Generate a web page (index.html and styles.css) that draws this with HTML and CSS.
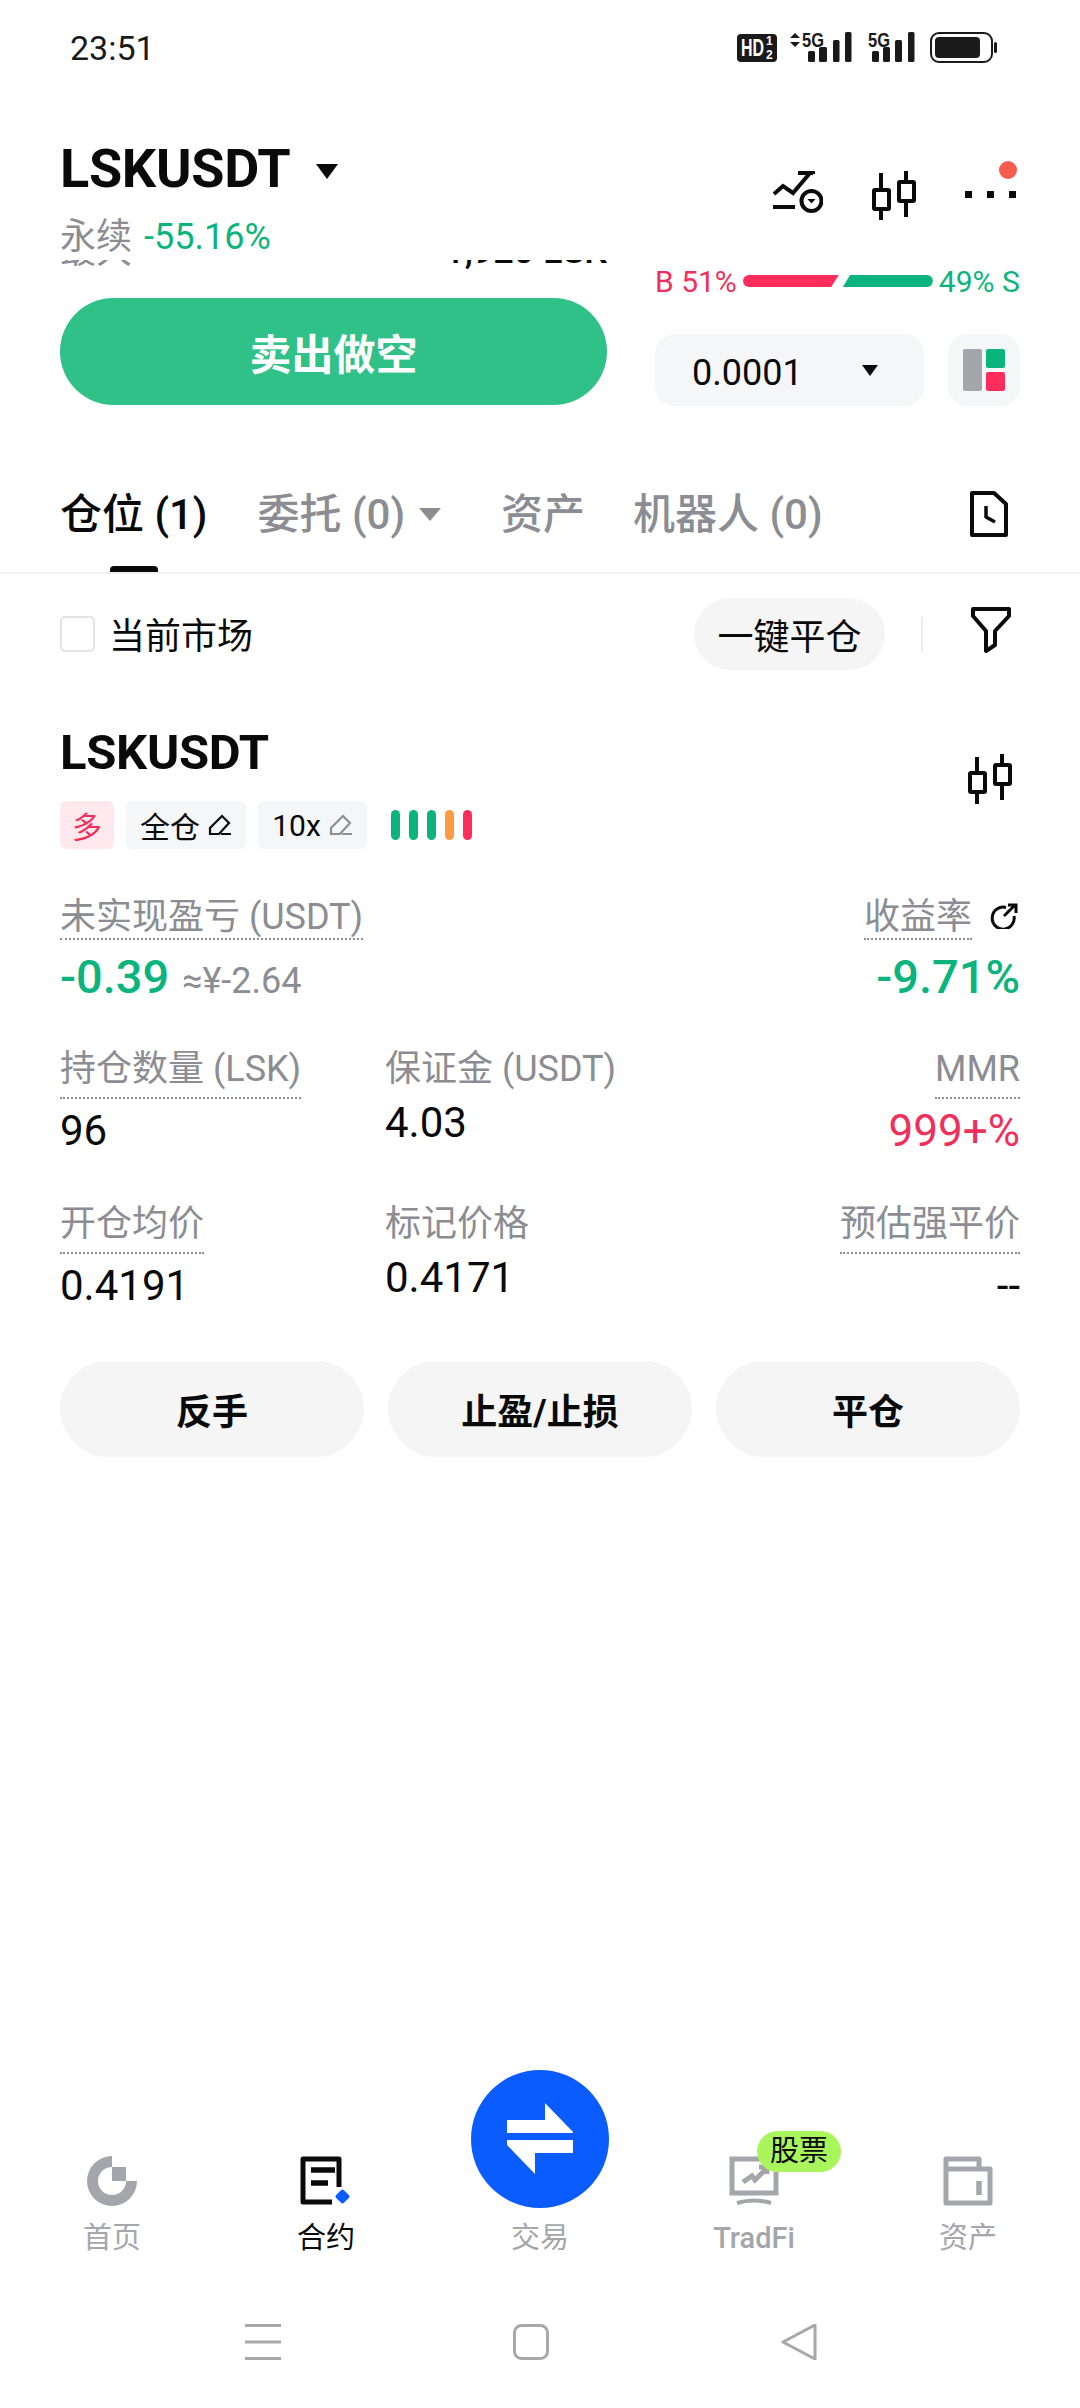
FILE: index.html
```html
<!DOCTYPE html>
<html lang="zh-CN">
<head>
<meta charset="utf-8">
<title>LSKUSDT</title>
<link rel="stylesheet" href="styles.css">
</head>
<body>
<div class="phone">
  <div class="status">
    <span class="clock">23:51</span>
    <svg class="status-icons" width="262" height="34" viewBox="0 0 262 34">
      <rect x="0" y="3" width="40" height="28" rx="4" fill="#1a1a1a"/>
      <text x="4" y="25" class="sb-hd" textLength="23" lengthAdjust="spacingAndGlyphs">HD</text>
      <text x="29" y="14" class="sb-frac">1</text>
      <text x="29" y="28" class="sb-frac">2</text>
      <path d="M53 7l5-5 5 5zM53 11l5 5 5-5z" fill="#1a1a1a"/>
      <text x="65" y="16" class="sb-5g" textLength="22" lengthAdjust="spacingAndGlyphs">5G</text>
      <g fill="#1a1a1a">
        <rect x="71" y="20" width="7" height="11" rx="1.5"/>
        <rect x="82" y="16" width="8" height="15" rx="1.5"/>
        <rect x="96" y="9" width="6.500" height="22" rx="1.500"/>
        <rect x="108" y="1" width="6.500" height="30" rx="1.500"/>
      </g>
      <text x="131" y="16" class="sb-5g" textLength="22" lengthAdjust="spacingAndGlyphs">5G</text>
      <g fill="#1a1a1a">
        <rect x="135" y="20" width="7" height="11" rx="1.5"/>
        <rect x="146" y="16" width="7" height="15" rx="1.5"/>
        <rect x="158" y="9" width="7" height="22" rx="1.500"/>
        <rect x="171" y="1" width="6.500" height="30" rx="1.500"/>
      </g>
      <rect x="194" y="2" width="61" height="29" rx="8" fill="none" stroke="#1a1a1a" stroke-width="2"/>
      <rect x="198" y="6" width="45" height="21" rx="4" fill="#1a1a1a"/>
      <rect x="257" y="11" width="3" height="11" rx="1.500" fill="#1a1a1a"/>
    </svg>
  </div>

  <header class="head">
    <div class="head-left">
      <div class="title-row"><h1 class="title">LSKUSDT</h1><span class="caret caret-title"></span></div>
      <div class="subtitle"><span class="muted sub-name">永续</span><span class="up sub-pct">-55.16%</span></div>
    </div>
    <div class="head-icons">
      <svg class="icon-chart" width="50" height="44" viewBox="0 0 50 44" fill="none" stroke="#0a0a0a" stroke-width="4">
        <path d="M1 24 10 16l10 7L37 3M25 3h15v1"/>
        <path d="M0 37h22"/>
        <circle cx="38.500" cy="31" r="10"/>
        <path d="M34.500 29h8l-4 4.500z" fill="#0a0a0a" stroke="none"/>
      </svg>
      <svg class="icon-candle" width="48" height="52" viewBox="0 0 48 52" fill="none" stroke="#0a0a0a" stroke-width="4">
        <path d="M11 4v47M36 2v46"/>
        <rect x="4" y="21" width="15" height="19" rx="1" fill="#fff"/>
        <rect x="29" y="13" width="15" height="19" rx="1" fill="#fff"/>
      </svg>
      <div class="more">
        <span class="dot"></span><span class="dot"></span><span class="dot"></span>
        <span class="more-badge"></span>
      </div>
    </div>
  </header>

  <section class="trade">
    <div class="trade-left">
      <div class="clipped"><span class="muted">最大</span><span class="clipped-val">1,920 LSK</span></div>
      <button class="sell">卖出做空</button>
    </div>
    <div class="trade-right">
      <div class="ratio">
        <span class="down">B 51%</span>
        <span class="bar bar-buy"></span>
        <span class="bar bar-sell"></span>
        <span class="up">49% S</span>
      </div>
      <div class="controls">
        <div class="qty"><span class="qty-num">0.0001</span><span class="caret caret-qty"></span></div>
        <div class="layout-btn">
          <span class="lay lay-gray"></span>
          <span class="lay-col"><span class="lay lay-green"></span><span class="lay lay-red"></span></span>
        </div>
      </div>
    </div>
  </section>

  <nav class="tabs">
    <span class="tab tab-active">仓位 (1)</span>
    <span class="tab tab-b">委托 (0)</span><span class="caret caret-tab"></span>
    <span class="tab tab-c">资产</span>
    <span class="tab tab-d">机器人 (0)</span>
    <svg class="icon-doc" width="40" height="48" viewBox="0 0 40 48" fill="none" stroke="#0a0a0a" stroke-width="4" stroke-linejoin="round">
      <path d="M3 3h22l12 11v31H3z"/>
      <path d="M17 16v11l9 5" stroke-width="3.500"/>
    </svg>
  </nav>

  <div class="filter">
    <span class="check"></span>
    <span class="filter-label">当前市场</span>
    <button class="close-all">一键平仓</button>
    <span class="sep"></span>
    <svg width="40" height="48" viewBox="0 0 40 48" fill="none" stroke="#0a0a0a" stroke-width="4" stroke-linejoin="round">
      <path d="M2 3h36v7L24 25v14l-9 6V25L2 10z"/>
    </svg>
  </div>

  <section class="position">
    <div class="pos-head">
      <div>
        <h2 class="pos-title">LSKUSDT</h2>
        <div class="tags">
          <span class="tag tag-long">多</span>
          <span class="tag tag-cross">全仓
            <svg width="24" height="24" viewBox="0 0 24 24" fill="none" stroke="#0a0a0a" stroke-width="2.200"><path d="M2 21v-6L14 3l7 7-10 11zM13 21h10"/></svg>
          </span>
          <span class="tag tag-lev">10x
            <svg width="24" height="24" viewBox="0 0 24 24" fill="none" stroke="#8f8f8f" stroke-width="2.200"><path d="M2 21v-6L14 3l7 7-10 11zM13 21h10"/></svg>
          </span>
          <span class="adl">
            <span class="adl-bar adl-g"></span><span class="adl-bar adl-g"></span><span class="adl-bar adl-g"></span><span class="adl-bar adl-o"></span><span class="adl-bar adl-r"></span>
          </span>
        </div>
      </div>
      <svg class="pos-candle" width="48" height="52" viewBox="0 0 48 52" fill="none" stroke="#0a0a0a" stroke-width="4">
        <path d="M11 5v47M36 2v46"/>
        <rect x="4" y="21" width="15" height="19" rx="1" fill="#fff"/>
        <rect x="29" y="13" width="15" height="19" rx="1" fill="#fff"/>
      </svg>
    </div>

    <div class="pnl">
      <div class="cell">
        <span class="label dotted tight">未实现盈亏 (USDT)</span>
        <span class="pnl-val"><span class="big up">-0.39</span><span class="approx">≈¥-2.64</span></span>
      </div>
      <div class="cell cell-right">
        <span class="label-row"><span class="label dotted tight">收益率</span>
          <svg class="icon-share" width="28" height="26" viewBox="0 0 28 26" fill="none" stroke="#0a0a0a" stroke-width="3"><path d="M16 4.500A11 11 0 1 0 24 13M14 13 25 2M18 2h8v8"/></svg>
        </span>
        <span class="big up">-9.71%</span>
      </div>
    </div>

    <div class="row row-2">
      <div class="cell col-a"><span class="label dotted">持仓数量 (LSK)</span><span class="val val-a">96</span></div>
      <div class="cell col-b"><span class="label">保证金 (USDT)</span><span class="val val-b">4.03</span></div>
      <div class="cell cell-right"><span class="label dotted">MMR</span><span class="val val-mmr down">999+%</span></div>
    </div>

    <div class="row row-3">
      <div class="cell col-a"><span class="label dotted">开仓均价</span><span class="val val-a">0.4191</span></div>
      <div class="cell col-b"><span class="label">标记价格</span><span class="val val-b">0.4171</span></div>
      <div class="cell cell-right"><span class="label dotted">预估强平价</span><span class="val val-a">--</span></div>
    </div>

    <div class="actions">
      <button class="action">反手</button>
      <button class="action">止盈/止损</button>
      <button class="action">平仓</button>
    </div>
  </section>

  <div class="spacer"></div>

  <footer class="tabbar">
    <div class="item">
      <svg width="50" height="50" viewBox="0 0 50 50" fill="#a4a6ab">
        <path d="M25 0v11a14 14 0 1 0 14 14h11A25 25 0 1 1 25 0z"/>
        <rect x="25" y="11" width="14" height="14"/>
      </svg>
      <span>首页</span>
    </div>
    <div class="item item-active">
      <svg width="52" height="50" viewBox="0 0 52 50">
        <path d="M39 31V3H3v43h29" fill="none" stroke="#0a0a0a" stroke-width="5" stroke-linejoin="round"/>
        <path d="M11 14h24M11 27h17" stroke="#0a0a0a" stroke-width="5.500"/>
        <rect x="37" y="35" width="11" height="11" rx="2" transform="rotate(45 42.500 40.500)" fill="#0a5cff"/>
      </svg>
      <span>合约</span>
    </div>
    <div class="item item-trade">
      <div class="trade-fab">
        <svg width="66" height="72" viewBox="0 0 66 72" fill="#fff">
          <path d="M38 0 66 29v1H0V17h38zM0 37h66v13H28v21L0 42z"/>
        </svg>
      </div>
      <span>交易</span>
    </div>
    <div class="item item-latin">
      <svg width="50" height="50" viewBox="0 0 50 50" fill="none" stroke="#a4a6ab">
        <path d="M32 3H3v34h44V16" stroke-width="5"/>
        <path d="M14 26l9-6 3 4 10-10M30 11h8v7" stroke-width="5"/>
        <path d="M8 47q17-5 34 0" stroke-width="4"/>
      </svg>
      <span class="badge">股票</span>
      <span>TradFi</span>
    </div>
    <div class="item">
      <svg width="50" height="50" viewBox="0 0 50 50" fill="none" stroke="#a4a6ab" stroke-width="5">
        <path d="M3 47V3h33v10M3 13h44v34H3z" stroke-linejoin="round"/>
        <path d="M36 25v14" stroke-width="5.500"/>
      </svg>
      <span>资产</span>
    </div>
  </footer>

  <div class="sysnav">
    <svg width="36" height="36" viewBox="0 0 36 36" stroke="#a8a8a8" stroke-width="3"><path d="M0 1.500h36M0 18h36M0 34.500h36"/></svg>
    <svg width="36" height="36" viewBox="0 0 36 36" fill="none" stroke="#a8a8a8" stroke-width="3"><rect x="1.500" y="1.500" width="33" height="33" rx="7"/></svg>
    <svg width="36" height="36" viewBox="0 0 36 36" fill="none" stroke="#a8a8a8" stroke-width="3" stroke-linejoin="round"><path d="M2 18 34 1v34z"/></svg>
  </div>
</div>
</body>
</html>
```

FILE: styles.css
```css
* { box-sizing: border-box; }
html, body { margin: 0; padding: 0; background: #fff; }
body { font-family: Roboto, "Noto Sans CJK SC", sans-serif; color: #0a0a0a; }
button { font-family: inherit; border: 0; padding: 0; color: inherit; }
h1, h2 { margin: 0; }

.phone { width: 1080px; height: 2408px; display: flex; flex-direction: column; overflow: hidden; background: #fff; }
.up { color: #0cb47d; }
.down { color: #f0305c; }
.muted { color: #8b8d92; }

.status { height: 96px; display: flex; align-items: center; justify-content: space-between; padding: 0 81px 0 70px; flex: none; }
.clock { font-size: 34px; color: #1a1a1a; }
.status-icons { display: block; }
.sb-hd { font: 700 23px "Liberation Sans", sans-serif; fill: #fff; }
.sb-frac { font: 700 12px "Liberation Sans", sans-serif; fill: #fff; }
.sb-5g { font: 700 20px "Liberation Sans", sans-serif; fill: #1a1a1a; }

.head { height: 162px; flex: none; display: flex; justify-content: space-between; padding: 41px 60px 0; }
.title-row { display: flex; align-items: center; height: 64px; }
.title { font-size: 54px; font-weight: 700; line-height: 64px; letter-spacing: -0.3px; }
.caret { display: block; width: 0; height: 0; border-style: solid; border-color: #0a0a0a transparent transparent; }
.caret-title { border-width: 15px 11px 0; margin-left: 26px; margin-top: 4px; }
.subtitle { display: flex; align-items: center; height: 44px; margin-top: 13px; font-size: 36px; gap: 12px; }
.sub-name { margin-top: -6px; }
.sub-pct { font-size: 36px; margin-top: 2px; }
.head-icons { display: flex; align-items: flex-start; padding-top: 22px; padding-right: 4px; }
.icon-chart { margin-top: 11px; }
.icon-candle { margin-left: 47px; margin-top: 10px; }
.more { position: relative; display: flex; gap: 15px; margin-left: 47px; margin-top: 32px; }
.dot { width: 7px; height: 7px; background: #0a0a0a; }
.more-badge { position: absolute; width: 18px; height: 18px; border-radius: 50%; background: #f85c4e; right: -1px; top: -30px; }

.trade { flex: none; display: flex; gap: 48px; padding: 0 60px; }
.trade-left { width: 547px; padding-top: 2px; }
.clipped { height: 11px; overflow: hidden; display: flex; justify-content: space-between; align-items: flex-end; font-size: 36px; line-height: 40px; }
.clipped-val { font-weight: 500; }
.sell { display: block; width: 100%; height: 107px; margin-top: 27px; border-radius: 54px; background: #2fc187; color: #fff; font-size: 42px; font-weight: 700; }
.trade-right { width: 365px; padding-top: 3px; }
.ratio { display: flex; align-items: center; height: 40px; font-size: 30px; white-space: nowrap; }
.bar { display: block; height: 12px; }
.bar-buy { width: 96px; margin-left: 6px; background: #ff2d5c; border-radius: 6px 0 0 6px; clip-path: polygon(0 0, 100% 0, 92% 100%, 0 100%); }
.bar-sell { width: 90px; margin-left: 4px; margin-right: 6px; background: #0cb47d; border-radius: 0 6px 6px 0; clip-path: polygon(8% 0, 100% 0, 100% 100%, 0 100%); }
.controls { display: flex; gap: 24px; margin-top: 33px; }
.qty { width: 269px; height: 72px; background: #f5f6f7; border-radius: 20px; display: flex; align-items: center; justify-content: space-between; padding: 0 46px 0 37px; font-size: 36px; }
.qty-num { margin-top: 5px; }
.caret-qty { border-width: 11px 8px 0; }
.layout-btn { width: 72px; height: 72px; background: #f5f6f7; border-radius: 20px; display: flex; align-items: center; justify-content: center; gap: 4px; }
.lay { display: block; border-radius: 2px; }
.lay-gray { width: 19px; height: 42px; background: #a4a6ab; }
.lay-col { display: flex; flex-direction: column; gap: 4px; }
.lay-green { width: 19px; height: 19px; background: #0cb47d; }
.lay-red { width: 19px; height: 19px; background: #ff2d5c; }

.tabs { flex: none; height: 168px; display: flex; align-items: flex-start; padding: 82px 0 0 60px; border-bottom: 2px solid #f0f1f2; font-size: 42px; line-height: 54px; font-weight: 500; color: #8b8d92; }
.tab { position: relative; white-space: nowrap; }
.tab-active { color: #0a0a0a; }
.tab-active::after { content: ""; position: absolute; left: 50px; bottom: -30px; width: 48px; height: 6px; border-radius: 4px 4px 0 0; background: #0a0a0a; }
.tab-b { margin-left: 50px; }
.caret-tab { border-width: 13px 11px 0; border-top-color: #8b8d92; margin: 20px 0 0 14px; }
.tab-c { margin-left: 60px; }
.tab-d { margin-left: 48px; }
.icon-doc { margin-left: auto; margin-right: 71px; margin-top: 2px; }

.filter { flex: none; height: 96px; padding: 24px 69px 0 60px; display: flex; align-items: flex-start; }
.check { width: 35px; height: 36px; margin-top: 18px; border: 2px solid #e3e4e6; border-radius: 5px; }
.filter-label { margin-left: 14px; font-size: 36px; line-height: 72px; margin-top: 3px; }
.close-all { margin-left: auto; width: 191px; height: 72px; border-radius: 36px; background: #f5f5f5; font-size: 36px; }
.sep { width: 2px; height: 35px; background: #ececec; margin: 19px 48px 0 36px; }
.filter svg { margin-top: 8px; margin-left: 0; }

.position { flex: none; padding: 53px 60px 0; }
.pos-head { display: flex; justify-content: space-between; align-items: flex-start; }
.pos-title { font-size: 49px; line-height: 60px; font-weight: 700; letter-spacing: -0.3px; }
.pos-candle { margin-top: 29px; margin-right: 6px; }
.tags { display: flex; gap: 12px; margin-top: 18px; height: 48px; }
.tag { height: 48px; border-radius: 6px; display: flex; align-items: center; justify-content: center; font-size: 30px; background: #f5f6f7; }
.tag svg { margin-left: 8px; }
.tag-long { width: 54px; background: #ffe9ee; color: #f0305c; }
.tag-cross { width: 120px; }
.tag-lev { width: 109px; }
.adl { display: flex; gap: 9px; margin-left: 12px; align-items: center; }
.adl-bar { width: 9px; height: 30px; border-radius: 5px; }
.adl-g { background: #0cb47d; }
.adl-o { background: #ff9a45; }
.adl-r { background: #ff2d5c; }

.pnl { display: flex; justify-content: space-between; margin-top: 48px; }
.cell { display: flex; flex-direction: column; align-items: flex-start; }
.cell-right { align-items: flex-end; margin-left: auto; }
.label { font-size: 36px; line-height: 40px; color: #8b8d92; white-space: nowrap; }
.dotted { padding-bottom: 8px; border-bottom: 2px dotted #8b8d92; }
.tight { padding-bottom: 1px; }
.label-row { display: flex; align-items: flex-start; }
.icon-share { margin: 6px 2px 0 18px; }
.pnl-val { display: flex; align-items: baseline; }
.big { font-size: 47px; line-height: 54px; font-weight: 500; margin-top: 10px; }
.approx { font-size: 36px; color: #8b8d92; margin-left: 13px; }
.row { display: flex; }
.row-2 { margin-top: 45px; }
.row-3 { margin-top: 49px; }
.col-a { width: 325px; }
.val { font-size: 42px; line-height: 48px; font-weight: 450; }
.val-a { margin-top: 8px; }
.val-b { margin-top: 10px; }
.val-mmr { font-size: 44px; margin-top: 8px; }
.actions { display: flex; justify-content: space-between; margin-top: 51px; }
.action { width: 304px; height: 96px; border-radius: 48px; background: #f5f5f5; font-size: 36px; font-weight: 700; }

.spacer { flex: 1; }
.tabbar { flex: none; display: grid; grid-template-columns: repeat(5, 214px); padding-left: 5px; }
.item { position: relative; display: flex; flex-direction: column; align-items: center; justify-content: flex-end; font-size: 29px; line-height: 40px; color: #a4a6ab; }
.item > span:last-child { margin-top: 12px; }
.item-active { color: #0a0a0a; }
.item-latin { font-weight: 500; }
.item-trade > span:last-child { margin-top: 10px; }
.trade-fab { width: 138px; height: 138px; border-radius: 50%; background: #0a5cff; display: flex; align-items: center; justify-content: center; }
.badge { position: absolute; left: 110px; top: 61px; width: 84px; height: 41px; border-radius: 21px; background: #a9f65c; color: #0a0a0a; text-align: center; font-size: 29px; font-weight: 400; line-height: 41px; }
.sysnav { flex: none; height: 150px; padding: 66px 0 0 245px; display: flex; gap: 232px; align-items: flex-start; }
.sysnav svg { display: block; }
```
